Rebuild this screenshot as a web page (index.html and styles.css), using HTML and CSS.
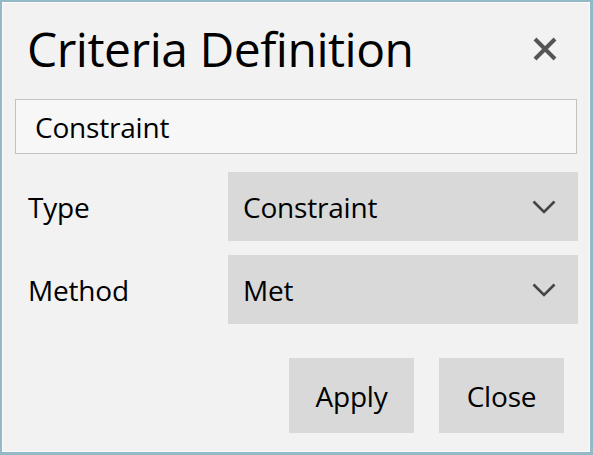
FILE: index.html
```html
<!DOCTYPE html>
<html>
<head>
<meta charset="utf-8">
<link rel="stylesheet" href="styles.css">
</head>
<body>
<div class="dialog">
  <div class="inner">
    <div class="header">
      <h1 class="title">Criteria Definition</h1>
      <svg class="close-x" width="26" height="26" viewBox="0 0 26 26">
        <path d="M3 3 L23 23 M23 3 L3 23" stroke="#555555" stroke-width="4" fill="none"/>
      </svg>
    </div>
    <div class="name-input">Constraint</div>
    <div class="fields">
      <div class="label">Type</div>
      <div class="select">
        <span>Constraint</span>
        <svg class="chev" width="24" height="14" viewBox="0 0 24 14">
          <path d="M1.5 1.5 L12 12 L22.5 1.5" stroke="#444444" stroke-width="2.6" fill="none"/>
        </svg>
      </div>
      <div class="label">Method</div>
      <div class="select">
        <span>Met</span>
        <svg class="chev" width="24" height="14" viewBox="0 0 24 14">
          <path d="M1.5 1.5 L12 12 L22.5 1.5" stroke="#444444" stroke-width="2.6" fill="none"/>
        </svg>
      </div>
    </div>
    <div class="buttons">
      <div class="btn">Apply</div>
      <div class="btn">Close</div>
    </div>
  </div>
</div>
</body>
</html>
```
FILE: styles.css
```css
html, body {
  margin: 0;
  padding: 0;
  background: #f2f2f2;
}
.dialog {
  width: 593px;
  height: 455px;
  box-sizing: border-box;
  border: 2px solid #93b8c6;
  border-bottom-width: 3px;
  border-right-width: 3px;
  background: #f2f2f2;
  font-family: "Open Sans", "Noto Sans", sans-serif;
  color: #000;
}
.inner {
  height: 100%;
  box-sizing: border-box;
  border: 1px solid #fbfbfb;
  padding: 0 12px 0 12px;
  display: flex;
  flex-direction: column;
}
.header {
  display: flex;
  align-items: center;
  justify-content: space-between;
  height: 96px;
  padding-left: 12px;
  padding-right: 19px;
}
.title {
  margin: 0;
  font-weight: 400;
  font-size: 48px;
  letter-spacing: -0.5px;
  line-height: 1;
  margin-top: -4px;
}
.close-x {
  display: block;
  margin-top: -4px;
}
.name-input {
  height: 55px;
  box-sizing: border-box;
  border: 1px solid #c2c2c2;
  background: #f7f7f7;
  padding-left: 19px;
  display: flex;
  align-items: center;
  font-size: 28px;
  letter-spacing: -0.2px;
}
.fields {
  display: grid;
  grid-template-columns: 213px 350px;
  row-gap: 14px;
  margin-top: 18px;
}
.label {
  padding-left: 13px;
  display: flex;
  align-items: center;
  font-size: 28px;
  letter-spacing: -0.2px;
  height: 69px;
}
.select {
  height: 69px;
  background: #d9d9d9;
  display: flex;
  align-items: center;
  justify-content: space-between;
  padding-left: 15px;
  padding-right: 22px;
  font-size: 28px;
  letter-spacing: -0.2px;
}
.chev {
  display: block;
}
.buttons {
  display: flex;
  justify-content: flex-end;
  gap: 25px;
  margin-top: 34px;
  padding-right: 13px;
}
.btn {
  width: 125px;
  height: 75px;
  background: #d9d9d9;
  display: flex;
  align-items: center;
  justify-content: center;
  font-size: 28px;
  letter-spacing: -0.2px;
}
```
